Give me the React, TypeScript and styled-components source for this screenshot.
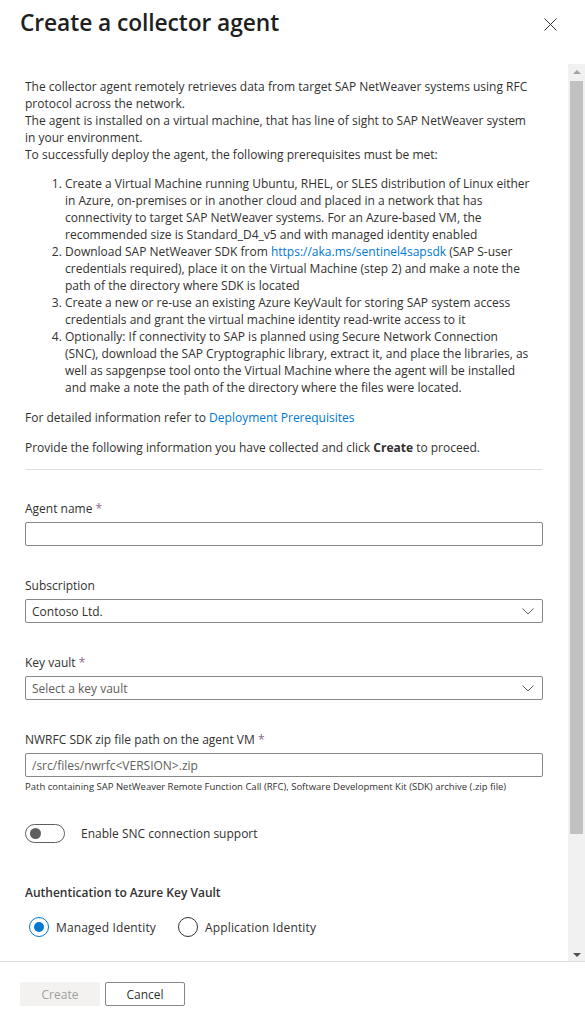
import React from "react";
import styled, { createGlobalStyle } from "styled-components";

const FONT = `"Open Sans", "Noto Sans", Arial, sans-serif`;
const TEXT = "#323130";

const Global = createGlobalStyle`
  html, body { margin: 0; padding: 0; background: #fff; }
  body { font-family: ${FONT}; color: ${TEXT}; }
  * { box-sizing: border-box; }
`;

const Panel = styled.div`
  width: 585px;
  height: 1026px;
  display: flex;
  flex-direction: column;
  background: #fff;
  overflow: hidden;
`;

const Header = styled.header`
  height: 64px;
  flex: none;
  display: flex;
  align-items: flex-start;
  justify-content: space-between;
  padding: 7px 28px 0 20px;
`;

const Title = styled.h1`
  margin: 0;
  font-size: 22.8px;
  font-weight: 600;
  line-height: 32px;
  color: #201f1e;
  letter-spacing: -0.1px;
`;

const CloseButton = styled.button`
  border: 0;
  background: transparent;
  padding: 0;
  margin-top: 10px;
  width: 14px;
  height: 14px;
  display: flex;
  align-items: center;
  justify-content: center;
  cursor: pointer;
`;

const Body = styled.div`
  height: 897px;
  flex: none;
  display: flex;
`;

const Content = styled.div`
  flex: 1;
  min-width: 0;
  overflow: hidden;
  padding: 14px 25px 0 25px;
  font-size: 12px;
  line-height: 17px;
`;

const Scrollbar = styled.div`
  width: 17px;
  flex: none;
  background: #f1f1f1;
  display: flex;
  flex-direction: column;
  align-items: center;
  padding: 6px 0 4px;
`;

const Arrow = styled.div<{ $down?: boolean }>`
  width: 0;
  height: 0;
  border-left: 4px solid transparent;
  border-right: 4px solid transparent;
  ${(p) =>
    p.$down
      ? `border-top: 4px solid #505050; margin-top: auto;`
      : `border-bottom: 4px solid #a3a3a3;`}
  flex: none;
`;

const Thumb = styled.div`
  width: 13px;
  height: 753px;
  margin-top: 7px;
  background: #c1c1c1;
  flex: none;
`;

const Para = styled.p<{ $tight?: boolean }>`
  margin: 0 0 ${(p) => (p.$tight ? 0 : 13)}px;
`;

const Steps = styled.ol`
  margin: 12px 0 13px;
  padding-left: 40px;
`;

const Link = styled.a`
  color: #0078d4;
  text-decoration: none;
`;

const Divider = styled.hr`
  border: 0;
  border-top: 1px solid #e1dfdd;
  margin: 0 0 30px;
`;

const Field = styled.div<{ $last?: boolean }>`
  margin-bottom: ${(p) => (p.$last ? 0 : 31)}px;
`;

const Label = styled.label`
  display: block;
  line-height: 17px;
  margin-bottom: 5px;
`;

const Required = styled.span`
  color: #8a6a8a;
`;

const InputBox = styled.div<{ $placeholder?: boolean }>`
  height: 24px;
  border: 1px solid #8a8886;
  border-radius: 2px;
  display: flex;
  align-items: center;
  justify-content: space-between;
  padding: 0 8px 0 6px;
  color: ${(p) => (p.$placeholder ? "#605e5c" : TEXT)};
  white-space: nowrap;
`;

const Help = styled.div`
  font-size: 9.5px;
  line-height: 12px;
  margin-top: 4px;
`;

const ToggleRow = styled.div`
  display: flex;
  align-items: center;
  gap: 16px;
  margin: 31px 0 41px;
`;

const Toggle = styled.div`
  width: 40px;
  height: 19px;
  border: 1px solid #605e5c;
  border-radius: 10px;
  display: flex;
  align-items: center;
  padding-left: 4px;
  &::after {
    content: "";
    width: 11px;
    height: 11px;
    border-radius: 50%;
    background: #605e5c;
  }
`;

const SectionTitle = styled.div`
  font-weight: 600;
  line-height: 17px;
  margin-bottom: 16px;
`;

const RadioGroup = styled.div`
  display: flex;
  align-items: center;
  gap: 22px;
  padding-left: 4px;
`;

const RadioItem = styled.label`
  display: flex;
  align-items: center;
  gap: 7px;
`;

const RadioCircle = styled.span<{ $checked?: boolean }>`
  width: 20px;
  height: 20px;
  border-radius: 50%;
  border: 1px solid ${(p) => (p.$checked ? "#0078d4" : "#323130")};
  display: flex;
  align-items: center;
  justify-content: center;
  &::after {
    content: "";
    width: 10px;
    height: 10px;
    border-radius: 50%;
    background: ${(p) => (p.$checked ? "#0078d4" : "transparent")};
  }
`;

const RadioText = styled.span`
  letter-spacing: 0.15px;
`;

const Footer = styled.footer`
  flex: 1;
  border-top: 1px solid #e1dfdd;
  display: flex;
  gap: 5px;
  padding: 20px 20px 0;
`;

const Button = styled.button<{ $disabled?: boolean }>`
  width: 80px;
  height: 24px;
  font-family: ${FONT};
  font-size: 12px;
  border-radius: 2px;
  border: 1px solid ${(p) => (p.$disabled ? "#f3f2f1" : "#8a8886")};
  background: ${(p) => (p.$disabled ? "#f3f2f1" : "#fff")};
  color: ${(p) => (p.$disabled ? "#a19f9d" : TEXT)};
  padding: 0;
`;

const Chevron = () => (
  <svg width="12" height="7" viewBox="0 0 12 7">
    <path d="M0.5 0.5 L6 6 L11.5 0.5" fill="none" stroke="#605e5c" strokeWidth="1" />
  </svg>
);

export default function App() {
  return (
    <>
      <Global />
      <Panel>
        <Header>
          <Title>Create a collector agent</Title>
          <CloseButton aria-label="Close">
            <svg width="13" height="13" viewBox="0 0 13 13">
              <path d="M0.5 0.5 L12.5 12.5 M12.5 0.5 L0.5 12.5" stroke="#323130" strokeWidth="1" />
            </svg>
          </CloseButton>
        </Header>
        <Body>
          <Content>
            <Para $tight>
              The collector agent remotely retrieves data from target SAP NetWeaver systems using RFC
              <br />
              protocol across the network.
              <br />
              The agent is installed on a virtual machine, that has line of sight to SAP NetWeaver system
              <br />
              in your environment.
              <br />
              To successfully deploy the agent, the following prerequisites must be met:
            </Para>
            <Steps>
              <li>
                Create a Virtual Machine running Ubuntu, RHEL, or SLES distribution of Linux either
                <br />
                in Azure, on-premises or in another cloud and placed in a network that has
                <br />
                connectivity to target SAP NetWeaver systems. For an Azure-based VM, the
                <br />
                recommended size is Standard_D4_v5 and with managed identity enabled
              </li>
              <li>
                Download SAP NetWeaver SDK from <Link href="#">https://aka.ms/sentinel4sapsdk</Link> (SAP S-user
                <br />
                credentials required), place it on the Virtual Machine (step 2) and make a note the
                <br />
                path of the directory where SDK is located
              </li>
              <li>
                Create a new or re-use an existing Azure KeyVault for storing SAP system access
                <br />
                credentials and grant the virtual machine identity read-write access to it
              </li>
              <li>
                Optionally: If connectivity to SAP is planned using Secure Network Connection
                <br />
                (SNC), download the SAP Cryptographic library, extract it, and place the libraries, as
                <br />
                well as sapgenpse tool onto the Virtual Machine where the agent will be installed
                <br />
                and make a note the path of the directory where the files were located.
              </li>
            </Steps>
            <Para>
              For detailed information refer to <Link href="#">Deployment Prerequisites</Link>
            </Para>
            <Para>
              Provide the following information you have collected and click <b>Create</b> to proceed.
            </Para>
            <Divider />
            <Field>
              <Label>
                Agent name <Required>*</Required>
              </Label>
              <InputBox />
            </Field>
            <Field>
              <Label>Subscription</Label>
              <InputBox>
                <span>Contoso Ltd.</span>
                <Chevron />
              </InputBox>
            </Field>
            <Field>
              <Label>
                Key vault <Required>*</Required>
              </Label>
              <InputBox $placeholder>
                <span>Select a key vault</span>
                <Chevron />
              </InputBox>
            </Field>
            <Field $last>
              <Label>
                NWRFC SDK zip file path on the agent VM <Required>*</Required>
              </Label>
              <InputBox $placeholder>
                <span>/src/files/nwrfc&lt;VERSION&gt;.zip</span>
              </InputBox>
              <Help>
                Path containing SAP NetWeaver Remote Function Call (RFC), Software Development Kit (SDK) archive (.zip file)
              </Help>
            </Field>
            <ToggleRow>
              <Toggle />
              <span>Enable SNC connection support</span>
            </ToggleRow>
            <SectionTitle>Authentication to Azure Key Vault</SectionTitle>
            <RadioGroup>
              <RadioItem>
                <RadioCircle $checked />
                <RadioText>Managed Identity</RadioText>
              </RadioItem>
              <RadioItem>
                <RadioCircle />
                <RadioText>Application Identity</RadioText>
              </RadioItem>
            </RadioGroup>
          </Content>
          <Scrollbar>
            <Arrow />
            <Thumb />
            <Arrow $down />
          </Scrollbar>
        </Body>
        <Footer>
          <Button $disabled disabled>
            Create
          </Button>
          <Button>Cancel</Button>
        </Footer>
      </Panel>
    </>
  );
}
